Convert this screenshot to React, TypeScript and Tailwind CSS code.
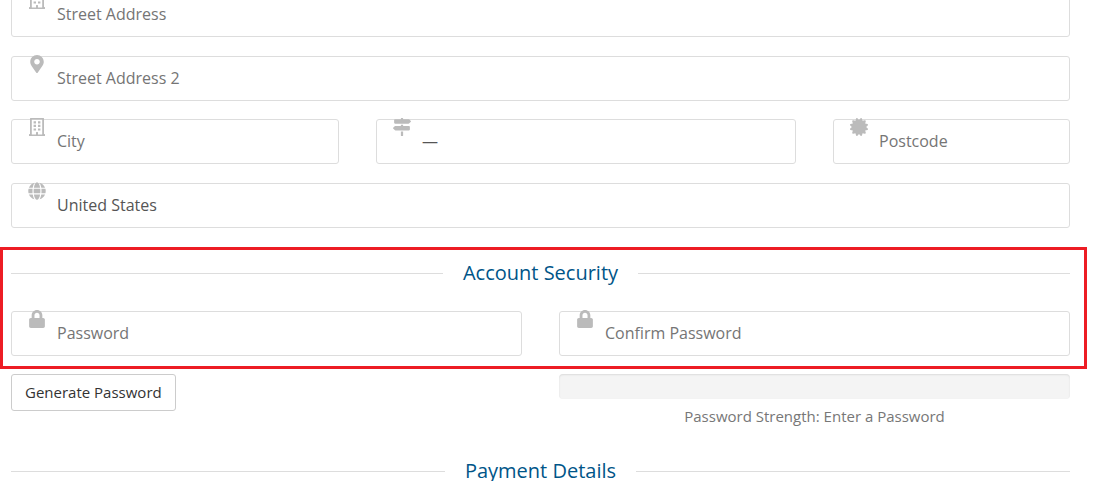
import { useState } from "react";
import type { ReactNode } from "react";
import {
  FaCertificate,
  FaGlobe,
  FaLock,
  FaMapMarkerAlt,
  FaMapSigns,
} from "react-icons/fa";

const controlClasses =
  "block h-[45px] w-full appearance-none rounded-[3px] border border-[#ddd] bg-white pb-[2px] pl-[45px] pr-3 text-base outline-none";

function BuildingIcon() {
  return (
    <svg width="16" height="18" viewBox="0 0 16 18" fill="currentColor" aria-hidden="true">
      <path
        fillRule="evenodd"
        d="M1.500 0h13q.5 0 .5.5V16h.5q.5 0 .5.5V18H0v-1.500q0-.5.5-.5H1V.5Q1 0 1.500 0zM2.800 1.600V16.400H7V14.500q0-.5.5-.5h1q.5 0 .5.5v1.900h4.200V1.600z"
      />
      <path d="M4.600 3.200h2.400v2.200H4.600zM9 3.200h2.400v2.200H9zM4.600 6.800h2.400V9H4.600zM9 6.800h2.400V9H9zM4.600 10.400h2.400v2.200H4.600zM9 10.400h2.400v2.200H9z" />
    </svg>
  );
}

interface FieldProps {
  id: string;
  icon: ReactNode;
  children: ReactNode;
}

function Field({ id, icon, children }: FieldProps) {
  return (
    <div className="relative">
      {children}
      <label
        htmlFor={id}
        className="absolute -top-px left-4 flex w-5 justify-center text-lg text-[#bbb]"
      >
        {icon}
      </label>
    </div>
  );
}

interface TextFieldProps {
  id: string;
  icon: ReactNode;
  label: string;
  type?: string;
}

function TextField({ id, icon, label, type = "text" }: TextFieldProps) {
  return (
    <Field id={id} icon={icon}>
      <input
        id={id}
        name={id}
        type={type}
        aria-label={label}
        placeholder={label}
        className={`${controlClasses} text-[#666] placeholder:text-[#757575]`}
      />
    </Field>
  );
}

interface SelectFieldProps {
  id: string;
  icon: ReactNode;
  label: string;
  options: string[];
}

function SelectField({ id, icon, label, options }: SelectFieldProps) {
  return (
    <Field id={id} icon={icon}>
      <select
        id={id}
        name={id}
        aria-label={label}
        className={`${controlClasses} text-[#555]`}
      >
        {options.map((option) => (
          <option key={option}>{option}</option>
        ))}
      </select>
    </Field>
  );
}

function SectionHeading({ children }: { children: ReactNode }) {
  return (
    <div className="flex items-center gap-5">
      <span className="h-px flex-1 bg-[#ddd]" />
      <h2 className="text-xl leading-7 text-[#058]">{children}</h2>
      <span className="h-px flex-1 bg-[#ddd]" />
    </div>
  );
}

export default function App() {
  const [strength] = useState("Enter a Password");

  return (
    <main className="h-screen overflow-hidden bg-white pr-[9px] font-['Open_Sans',sans-serif]">
      <form>
        <div className="-mt-2 flex flex-col gap-[19px] pl-[11px] pr-[17px]">
          <TextField id="address1" label="Street Address" icon={<BuildingIcon />} />
          <TextField id="address2" label="Street Address 2" icon={<FaMapMarkerAlt />} />
          <div className="-mt-px grid grid-cols-[328fr_420fr_237fr] gap-[37px]">
            <TextField id="city" label="City" icon={<BuildingIcon />} />
            <SelectField id="state" label="State" options={["—"]} icon={<FaMapSigns />} />
            <TextField id="postcode" label="Postcode" icon={<FaCertificate />} />
          </div>
          <SelectField
            id="country"
            label="Country"
            options={["United States"]}
            icon={<FaGlobe />}
          />
        </div>

        <section className="mt-[19px] border-[3px] border-[#ed1c24] pb-[10px] pl-2 pr-[14px] pt-[9px]">
          <SectionHeading>Account Security</SectionHeading>
          <div className="mt-6 grid grid-cols-2 gap-[37px]">
            <TextField id="password" type="password" label="Password" icon={<FaLock />} />
            <TextField
              id="password2"
              type="password"
              label="Confirm Password"
              icon={<FaLock />}
            />
          </div>
        </section>

        <div className="mt-[5px] grid grid-cols-2 items-start gap-[37px] pl-[11px] pr-[17px]">
          <div>
            <button
              type="button"
              className="h-[37px] rounded-[3px] border border-[#ccc] bg-white px-[13px] text-[15px] text-[#333]"
            >
              Generate Password
            </button>
          </div>
          <div>
            <div className="h-[25px] rounded bg-[#f4f4f4] shadow-[inset_0_1px_2px_rgba(0,0,0,0.1)]" />
            <p className="mt-[6px] text-center text-[15px] leading-[22px] text-[#777]">
              Password Strength: {strength}
            </p>
          </div>
        </div>

        <div className="mt-[30px] pl-[11px] pr-[17px]">
          <SectionHeading>Payment Details</SectionHeading>
        </div>
      </form>
    </main>
  );
}
